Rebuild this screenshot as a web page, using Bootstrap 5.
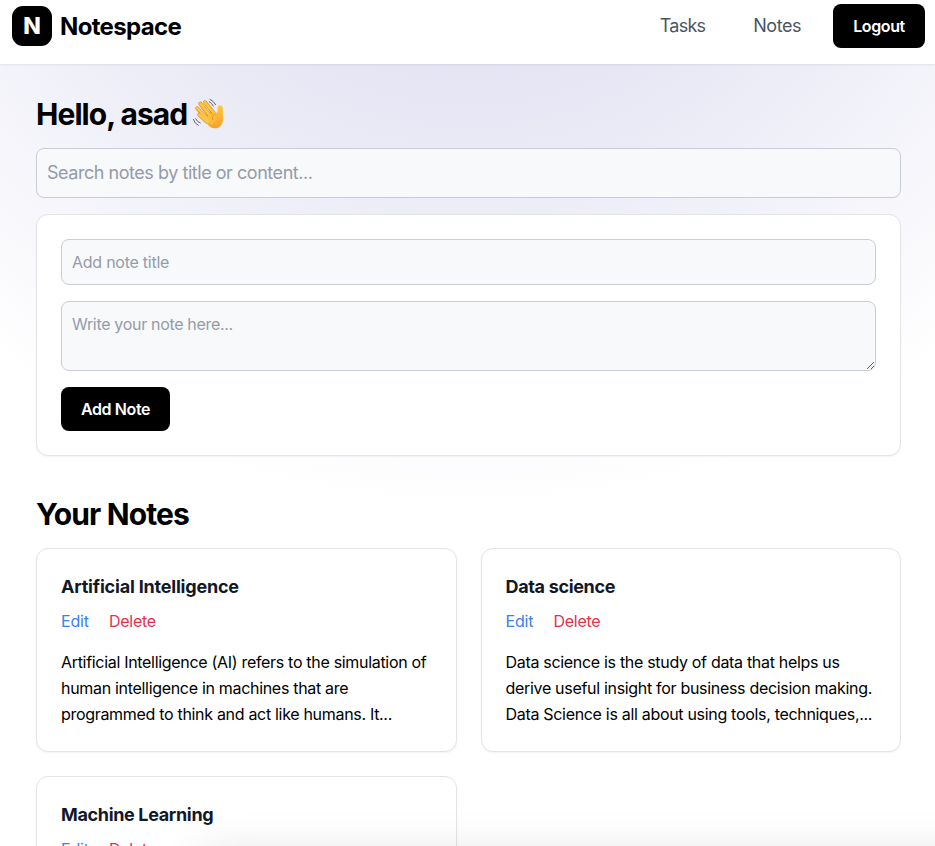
<!DOCTYPE html>
<html lang="en">
<head>
<meta charset="utf-8">
<meta name="viewport" content="width=device-width, initial-scale=1">
<title>Notespace</title>
<link href="https://cdn.jsdelivr.net/npm/bootstrap@5.3.0/dist/css/bootstrap.min.css" rel="stylesheet">
<style>
  html, body { height: 100%; overflow: hidden; }
  body { font-family: Inter, "Liberation Sans", sans-serif; color: #000; letter-spacing: -.31px;
    background: radial-gradient(ellipse 80% 80% at 50% -20%, rgba(120,119,198,.3), rgba(255,255,255,0)) #fff; }
  .topbar { height: 64px; padding: 4px 10px 0 12px; background: #fff; box-shadow: 0 1px 2px rgba(0,0,0,.08); }
  .logo-tile { width: 40px; height: 40px; border-radius: 11px; font-size: 23px; line-height: 1; font-weight: 800; letter-spacing: 0; margin-top: 2px; padding-top: 1px; }
  .logo-name { font-size: 24px; font-weight: 700; line-height: 32px; letter-spacing: -.65px; margin-top: 7px; }
  .top-links { gap: 48px; margin-right: 32px; }
  .top-link { font-size: 18px; line-height: 44px; color: #4b5563; letter-spacing: -.78px; }
  .top-link + .top-link { letter-spacing: -.46px; }
  .ink-btn { --bs-btn-bg: #000; --bs-btn-color: #fff; --bs-btn-hover-bg: #222; --bs-btn-hover-color: #fff; --bs-btn-border-width: 0;
    --bs-btn-font-weight: 600; --bs-btn-border-radius: 8px; --bs-btn-padding-x: 20px; --bs-btn-padding-y: 10px; height: 44px; letter-spacing: -.4px; }
  .logout { width: 92px; }
  .page-body { padding: 32px 34px 0 36px; }
  .page-title { font-size: 30px; line-height: 36px; font-weight: 700; letter-spacing: -.88px; }
  .hello { letter-spacing: -.95px; }
  .wave { margin-left: 6px; }
  .field { background: #f8f9fb; border: 1px solid #c9ccd4; border-radius: 8px; padding: 10px; letter-spacing: -.32px; }
  .field::placeholder { color: #959ba8; }
  .field-search { height: 50px; font-size: 18px; padding-bottom: 12px; letter-spacing: -.46px; }
  .field-title { height: 46px; letter-spacing: -.25px; }
  .field-text { height: 70px; }
  .panel { background: #fff; border: 1px solid #e3e4e8; border-radius: 12px; padding: 24px; box-shadow: 0 1px 2px rgba(0,0,0,.05); }
  .editor { margin-bottom: 40px; }
  .notes { display: grid; grid-template-columns: 1fr 1fr; gap: 24px; }
  .note { height: 204px; }
  .note-name { font-size: 18px; line-height: 28px; font-weight: 700; letter-spacing: -.34px; color: #111827; }
  .note-name.airy { letter-spacing: -.2px; }
  .note-actions { gap: 20px; line-height: 24px; letter-spacing: -.15px; }
  .edit { color: #3b7ff0; }
  .del { color: #e8304c; letter-spacing: -.25px; }
  .note p { line-height: 26px; }
  .dock-shadow { height: 60px; left: 200px; right: -80px; bottom: -68px; box-shadow: 0 0 44px rgba(0,0,0,.13); }
</style>
</head>
<body>
<header class="topbar d-flex justify-content-between align-items-start">
  <div class="d-flex gap-2">
    <div class="logo-tile bg-black text-white d-flex align-items-center justify-content-center">N</div>
    <div class="logo-name">Notespace</div>
  </div>
  <nav class="d-flex">
    <div class="top-links d-flex">
      <a class="top-link text-decoration-none" href="#">Tasks</a>
      <a class="top-link text-decoration-none" href="#">Notes</a>
    </div>
    <button class="btn ink-btn logout">Logout</button>
  </nav>
</header>
<main class="page-body">
  <h1 class="page-title hello mb-3 d-flex align-items-center">Hello, asad
    <svg class="wave" width="32" height="34" viewBox="12 6 96 102" fill="none" stroke-linecap="round" stroke-linejoin="round" aria-label="waving hand">
      <defs><linearGradient id="skin" x1="0" y1="0" x2="0" y2="1"><stop offset="0" stop-color="#ffc845"/><stop offset="1" stop-color="#f3a22a"/></linearGradient></defs>
      <path d="M52 56 66 44 79 55C84 54 86 50 86 41C85 29 98 27 101 38C103 46 101 52 102 62C103 72 103 78 99 86C92 101 76 104 63 95L46 78Z" fill="url(#skin)"/>
      <g stroke="#d98c1c" stroke-width="12"><path d="M48 22 74 54M34 26 62 62M25 40 54 71M31 59 54 80"/></g>
      <g stroke="#ffc545" stroke-width="8.5"><path d="M31 59 56 82M25 40 58 73M34 26 65 65M48 22 76 56"/></g>
      <path d="M57 60 77 56Q84 78 68 89L57 80Z" fill="#fdbe3c"/>
      <path d="M79 56Q68 62 71 74" stroke="#e0941e" stroke-width="2.5"/>
      <g stroke="#62656e" stroke-width="3"><path d="M63 13Q74 18 80 29M61 20Q69 24 73 33M13 73Q17 87 28 91M20 71Q24 81 34 84"/></g>
    </svg></h1>
  <input class="field field-search w-100 d-block mb-3" placeholder="Search notes by title or content...">
  <section class="panel editor">
    <input class="field field-title w-100 d-block mb-3" placeholder="Add note title">
    <textarea class="field field-text w-100 d-block mb-3" placeholder="Write your note here..."></textarea>
    <button class="btn ink-btn">Add Note</button>
  </section>
  <h2 class="page-title mb-3">Your Notes</h2>
  <section class="notes">
    <article class="panel note">
      <h3 class="note-name airy mb-2">Artificial Intelligence</h3>
      <div class="note-actions d-flex mb-3"><a class="edit text-decoration-none" href="#">Edit</a><a class="del text-decoration-none" href="#">Delete</a></div>
      <p class="mb-0">Artificial Intelligence (AI) refers to the simulation of<br>human intelligence in machines that are<br>programmed to think and act like humans. It...</p>
    </article>
    <article class="panel note">
      <h3 class="note-name mb-2">Data science</h3>
      <div class="note-actions d-flex mb-3"><a class="edit text-decoration-none" href="#">Edit</a><a class="del text-decoration-none" href="#">Delete</a></div>
      <p class="mb-0">Data science is the study of data that helps us<br>derive useful insight for business decision making.<br>Data Science is all about using tools, techniques,...</p>
    </article>
    <article class="panel note">
      <h3 class="note-name mb-2">Machine Learning</h3>
      <div class="note-actions d-flex mb-3"><a class="edit text-decoration-none" href="#">Edit</a><a class="del text-decoration-none" href="#">Delete</a></div>
    </article>
  </section>
</main>
<div class="dock-shadow position-fixed"></div>
<script src="https://cdn.jsdelivr.net/npm/bootstrap@5.3.0/dist/js/bootstrap.bundle.min.js"></script>
</body>
</html>
